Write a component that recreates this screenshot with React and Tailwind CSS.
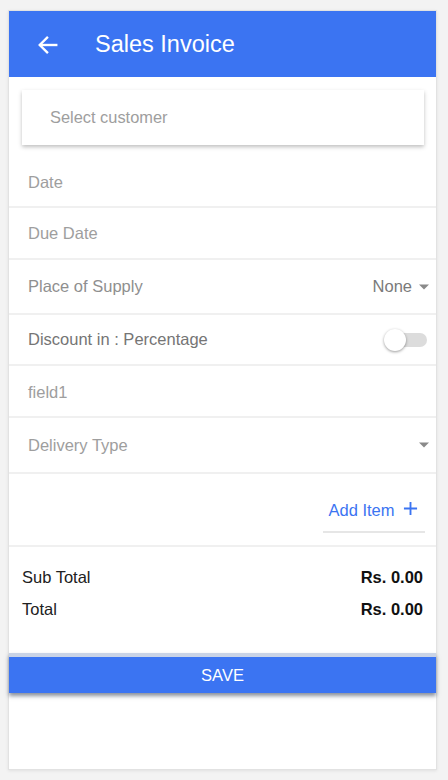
import React from "react";

function Row({ children, h, className = "" }) {
  return (
    <div
      className={`flex items-center justify-between px-[19px] border-b-2 border-[#f0f0f0] ${className}`}
      style={{ height: h }}
    >
      {children}
    </div>
  );
}

export default function App() {
  return (
    <div
      className="min-h-screen bg-[#f3f3f3] pt-[10px]"
      style={{ fontFamily: '"Liberation Sans", Arial, sans-serif' }}
    >
      <div className="ml-[8px] w-[429px] h-[760px] bg-white border border-[#e2e2e2] shadow-[0_1px_3px_rgba(0,0,0,0.08)] flex flex-col">
        <div className="h-[66px] bg-[#3b74f2] flex items-center shrink-0">
          <svg width="22" height="22" viewBox="0 0 24 24" className="ml-[28px] mt-[1px]" fill="none" stroke="white" strokeWidth="2.6" strokeLinecap="square">
            <path d="M21 12H4" />
            <path d="M11 4l-8 8 8 8" />
          </svg>
          <span className="ml-[36px] mt-[2px] text-white text-[23.5px] leading-none">Sales Invoice</span>
        </div>

        <div className="mt-[13px] ml-[13px] mr-[12px] h-[55px] bg-white shadow-[0_2px_4px_rgba(0,0,0,0.25)] flex items-center px-[28px]">
          <span className="text-[16.4px] text-[#9e9e9e]">Select customer</span>
        </div>

        <div className="mt-[11px]">
          <Row h={52}>
            <span className="text-[16.5px] text-[#9e9e9e] mt-[2px]">Date</span>
          </Row>
          <Row h={52}>
            <span className="text-[16.5px] text-[#9e9e9e]">Due Date</span>
          </Row>
          <Row h={55}>
            <span className="text-[16.5px] text-[#8f8f8f]">Place of Supply</span>
            <span className="flex items-center gap-[7px] mr-[-12px]">
              <span className="text-[16.5px] text-[#7a7a7a]">None</span>
              <svg width="10" height="6" viewBox="0 0 10 5"><path d="M0 0h10L5 5z" fill="#8a8a8a" /></svg>
            </span>
          </Row>
          <Row h={51}>
            <span className="text-[16.5px] text-[#757575]">Discount in : Percentage</span>
            <span className="relative w-[43px] h-[22px] mr-[-10px] flex items-center">
              <span className="absolute right-0 w-[37px] h-[14px] rounded-full bg-[#dcdcdc]" />
              <span className="absolute left-0 w-[22px] h-[22px] rounded-full bg-white shadow-[0_1px_3px_rgba(0,0,0,0.4)]" />
            </span>
          </Row>
          <Row h={52}>
            <span className="text-[16.5px] text-[#9e9e9e] mt-[2px]">field1</span>
          </Row>
          <Row h={56}>
            <span className="text-[16.5px] text-[#9e9e9e]">Delivery Type</span>
            <svg width="10" height="6" viewBox="0 0 10 5" className="mr-[-12px]"><path d="M0 0h10L5 5z" fill="#8a8a8a" /></svg>
          </Row>
        </div>

        <div className="h-[73px] border-b-2 border-[#f0f0f0] flex justify-end items-start pr-[11px]">
          <div className="mt-[23px] w-[102px] h-[36px] border-b-2 border-[#e6e6e6] flex items-start justify-center gap-[8px] pt-[1px] pr-[2px]">
            <span className="text-[16.5px] text-[#3b74f2]">Add Item</span>
            <svg width="15" height="15" viewBox="0 0 16 16" className="mt-[3px]" stroke="#3b74f2" strokeWidth="2">
              <path d="M8 1v14M1 8h14" />
            </svg>
          </div>
        </div>

        <div className="px-[13px] pt-[20px] flex flex-col gap-[12px]">
          <div className="flex justify-between items-center h-[20px]">
            <span className="text-[16.5px] text-[#212121]">Sub Total</span>
            <span className="text-[16.5px] font-bold text-[#111]">Rs. 0.00</span>
          </div>
          <div className="flex justify-between items-center h-[20px]">
            <span className="text-[16.5px] text-[#212121]">Total</span>
            <span className="text-[16.5px] font-bold text-[#111]">Rs. 0.00</span>
          </div>
        </div>

        <div className="mt-[34px] border-t-4 border-[#c9d3e6] h-[40px] bg-[#3b74f2] flex items-center justify-center shadow-[0_3px_4px_rgba(60,70,90,0.6)]">
          <span className="text-white text-[16.5px]">SAVE</span>
        </div>
      </div>
    </div>
  );
}
